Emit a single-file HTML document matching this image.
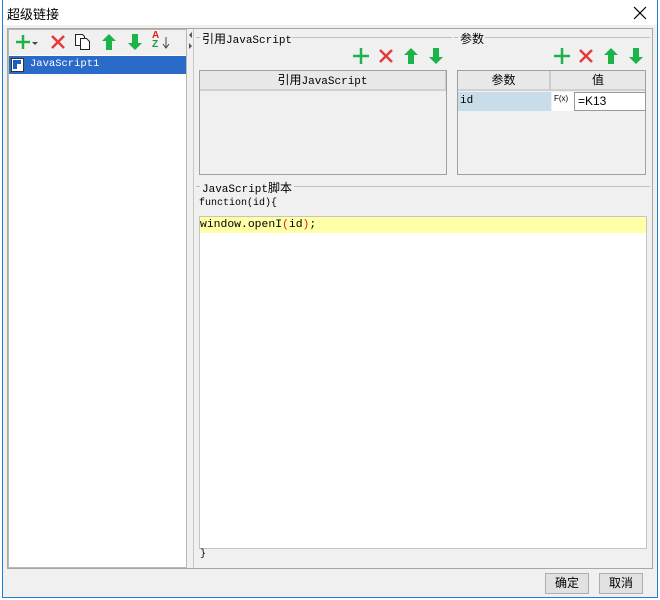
<!DOCTYPE html>
<html><head><meta charset="utf-8"><style>
*{margin:0;padding:0;box-sizing:border-box}
body{width:660px;height:600px;background:#fff;position:relative;overflow:hidden;font-family:"Liberation Sans","Noto Sans CJK SC",sans-serif;font-size:12px;color:#000}
.a{position:absolute}
.mono{font-family:"Liberation Mono","Noto Sans CJK SC",monospace}
.hd{background:#e8e8e8;border-bottom:2px solid #d0d0d0;text-align:center;height:20px;line-height:19px;font-size:12px}
svg{position:absolute}
</style></head><body>
<div class="a" style="left:2px;top:0;width:656px;height:598px;border:1px solid #1e7fd8;border-top:none;background:#f0f0f0"></div>
<div class="a" style="left:3px;top:0;width:654px;height:25px;background:#fff"></div>
<div class="a" style="left:7px;top:4px;font-size:13px">超级链接</div>
<svg style="left:633px;top:6px" width="14" height="14"><path d="M1 1L13 13M13 1L1 13" stroke="#000" stroke-width="1.2"/></svg>
<div class="a" style="left:7px;top:28px;width:646px;height:541px;border:1px solid #a8a8a0"></div>
<div class="a" style="left:8px;top:29px;width:179px;height:539px;border:1px solid #b8b8ae;background:#f0f0f0"></div>
<div class="a" style="left:9px;top:55px;width:177px;height:512px;background:#fff"></div>
<div class="a" style="left:9px;top:56px;width:177px;height:18px;background:#2a6bc9"></div>
<svg style="left:11px;top:58px" width="14" height="14"><rect x="0.5" y="0.5" width="12" height="13" fill="#fff" stroke="#333"/><rect x="2" y="2" width="8" height="9" fill="#1a5fbf"/><rect x="6" y="6" width="4" height="5" fill="#fff"/></svg>
<div class="a mono" style="left:30px;top:58px;color:#fff;font-size:10.5px">JavaScript1</div>
<svg style="left:15px;top:33px" width="26" height="18"><path d="M8 2V16M1 9H15" stroke="#1eb34a" stroke-width="2.5"/><path d="M17 9h6l-3 3z" fill="#444"/></svg>
<svg style="left:50px;top:34px" width="16" height="16"><path d="M2 2L14 14M14 2L2 14" stroke="#e23b3b" stroke-width="2.5"/></svg>
<svg style="left:74px;top:33px" width="18" height="18"><path d="M1.5 1.5h7l2 2v9h-9z" fill="#fff" stroke="#222"/><path d="M6.5 5.5h6l3 3v8h-9z" fill="#fff" stroke="#222"/></svg>
<svg style="left:101px;top:33px" width="16" height="18"><path d="M8 1L15 8H11V17H5V8H1Z" fill="#1eb34a"/></svg>
<svg style="left:127px;top:33px" width="16" height="18"><path d="M8 17L15 10H11V1H5V10H1Z" fill="#1eb34a"/></svg>
<div class="a" style="left:152px;top:31px;font-size:10px;font-weight:bold;color:#d22;line-height:10px">A</div>
<div class="a" style="left:152px;top:40px;font-size:10px;font-weight:bold;color:#1a9a3a;line-height:10px">Z</div>
<svg style="left:162px;top:37px" width="8" height="12"><path d="M4 0V10M1 7l3 4 3-4" stroke="#444" fill="none"/></svg>
<svg style="left:188px;top:31px" width="5" height="20"><path d="M4 1V7L1 4Z" fill="#555"/><path d="M1 12V18L4 15Z" fill="#555"/></svg>
<div class="a" style="left:193px;top:29px;width:1px;height:539px;background:#c8c8c0"></div>
<div class="a" style="left:196px;top:37px;width:4px;height:1px;background:#c0c0c0"></div>
<div class="a" style="left:202px;top:30px;font-size:12px"><span>引用</span><span class="mono" style="font-size:11px">JavaScript</span></div>
<div class="a" style="left:292px;top:37px;width:160px;height:1px;background:#c0c0c0"></div>
<div class="a" style="left:454px;top:37px;width:4px;height:1px;background:#c0c0c0"></div>
<div class="a" style="left:460px;top:30px;font-size:12px">参数</div>
<div class="a" style="left:485px;top:37px;width:165px;height:1px;background:#c0c0c0"></div>
<svg style="left:352px;top:48px" width="18" height="16"><path d="M9 0V16M1 8H17" stroke="#1eb34a" stroke-width="2.5"/></svg>
<svg style="left:379px;top:49px" width="14" height="14"><path d="M1 1L13 13M13 1L1 13" stroke="#e23b3b" stroke-width="2.5"/></svg>
<svg style="left:403px;top:47px" width="16" height="18"><path d="M8 1L15 8H11V17H5V8H1Z" fill="#1eb34a"/></svg>
<svg style="left:428px;top:47px" width="16" height="18"><path d="M8 17L15 10H11V1H5V10H1Z" fill="#1eb34a"/></svg>
<svg style="left:553px;top:48px" width="18" height="16"><path d="M9 0V16M1 8H17" stroke="#1eb34a" stroke-width="2.5"/></svg>
<svg style="left:579px;top:49px" width="14" height="14"><path d="M1 1L13 13M13 1L1 13" stroke="#e23b3b" stroke-width="2.5"/></svg>
<svg style="left:603px;top:47px" width="16" height="18"><path d="M8 1L15 8H11V17H5V8H1Z" fill="#1eb34a"/></svg>
<svg style="left:628px;top:47px" width="16" height="18"><path d="M8 17L15 10H11V1H5V10H1Z" fill="#1eb34a"/></svg>
<div class="a" style="left:199px;top:70px;width:248px;height:105px;border:1px solid #a0a0a0;background:#f0f0f0">
<div class="hd" style="width:246px;border-right:1px solid #ccc"><span>引用</span><span class="mono" style="font-size:11px">JavaScript</span></div></div>
<div class="a" style="left:457px;top:70px;width:189px;height:105px;border:1px solid #a0a0a0;background:#f0f0f0">
<div class="hd" style="display:flex;padding:0"><div style="width:93px;border-right:2px solid #ccc">参数</div><div style="flex:1">值</div></div>
<div style="position:absolute;left:0;top:21px;width:93px;height:19px;background:#c9dcea;font-family:'Liberation Mono',monospace;font-size:11px;line-height:19px;padding-left:2px">id</div>
<div style="position:absolute;left:94px;top:21px;width:22px;height:19px;background:#fff;font-size:8px;line-height:14px;padding-left:2px">F(x)</div>
<div style="position:absolute;left:116px;top:21px;width:72px;height:19px;background:#fff;border:1px solid #999;font-size:12px;line-height:16px;padding-left:3px">=K13</div>
</div>
<div class="a" style="left:196px;top:186px;width:4px;height:1px;background:#c0c0c0"></div>
<div class="a" style="left:202px;top:179px;font-size:12px"><span class="mono" style="font-size:11px">JavaScript</span><span>脚本</span></div>
<div class="a" style="left:294px;top:186px;width:356px;height:1px;background:#c0c0c0"></div>
<div class="a mono" style="left:199px;top:198px;font-size:10px">function(id){</div>
<div class="a" style="left:199px;top:216px;width:448px;height:333px;background:#fff;border:1px solid #c8c4b8"></div>
<div class="a" style="left:200px;top:217px;width:446px;height:16px;background:#ffffa8"></div>
<div class="a mono" style="left:200px;top:217px;font-size:11.4px;line-height:16px">window.openI<span style="color:#d22">(</span>id<span style="color:#d22">)</span>;</div>
<div class="a mono" style="left:200px;top:549px;font-size:10px">}</div>
<div class="a" style="left:545px;top:573px;width:44px;height:21px;border:1px solid #adadad;background:#e1e1e1;text-align:center;line-height:19px">确定</div>
<div class="a" style="left:599px;top:573px;width:44px;height:21px;border:1px solid #adadad;background:#e1e1e1;text-align:center;line-height:19px">取消</div>
</body></html>
